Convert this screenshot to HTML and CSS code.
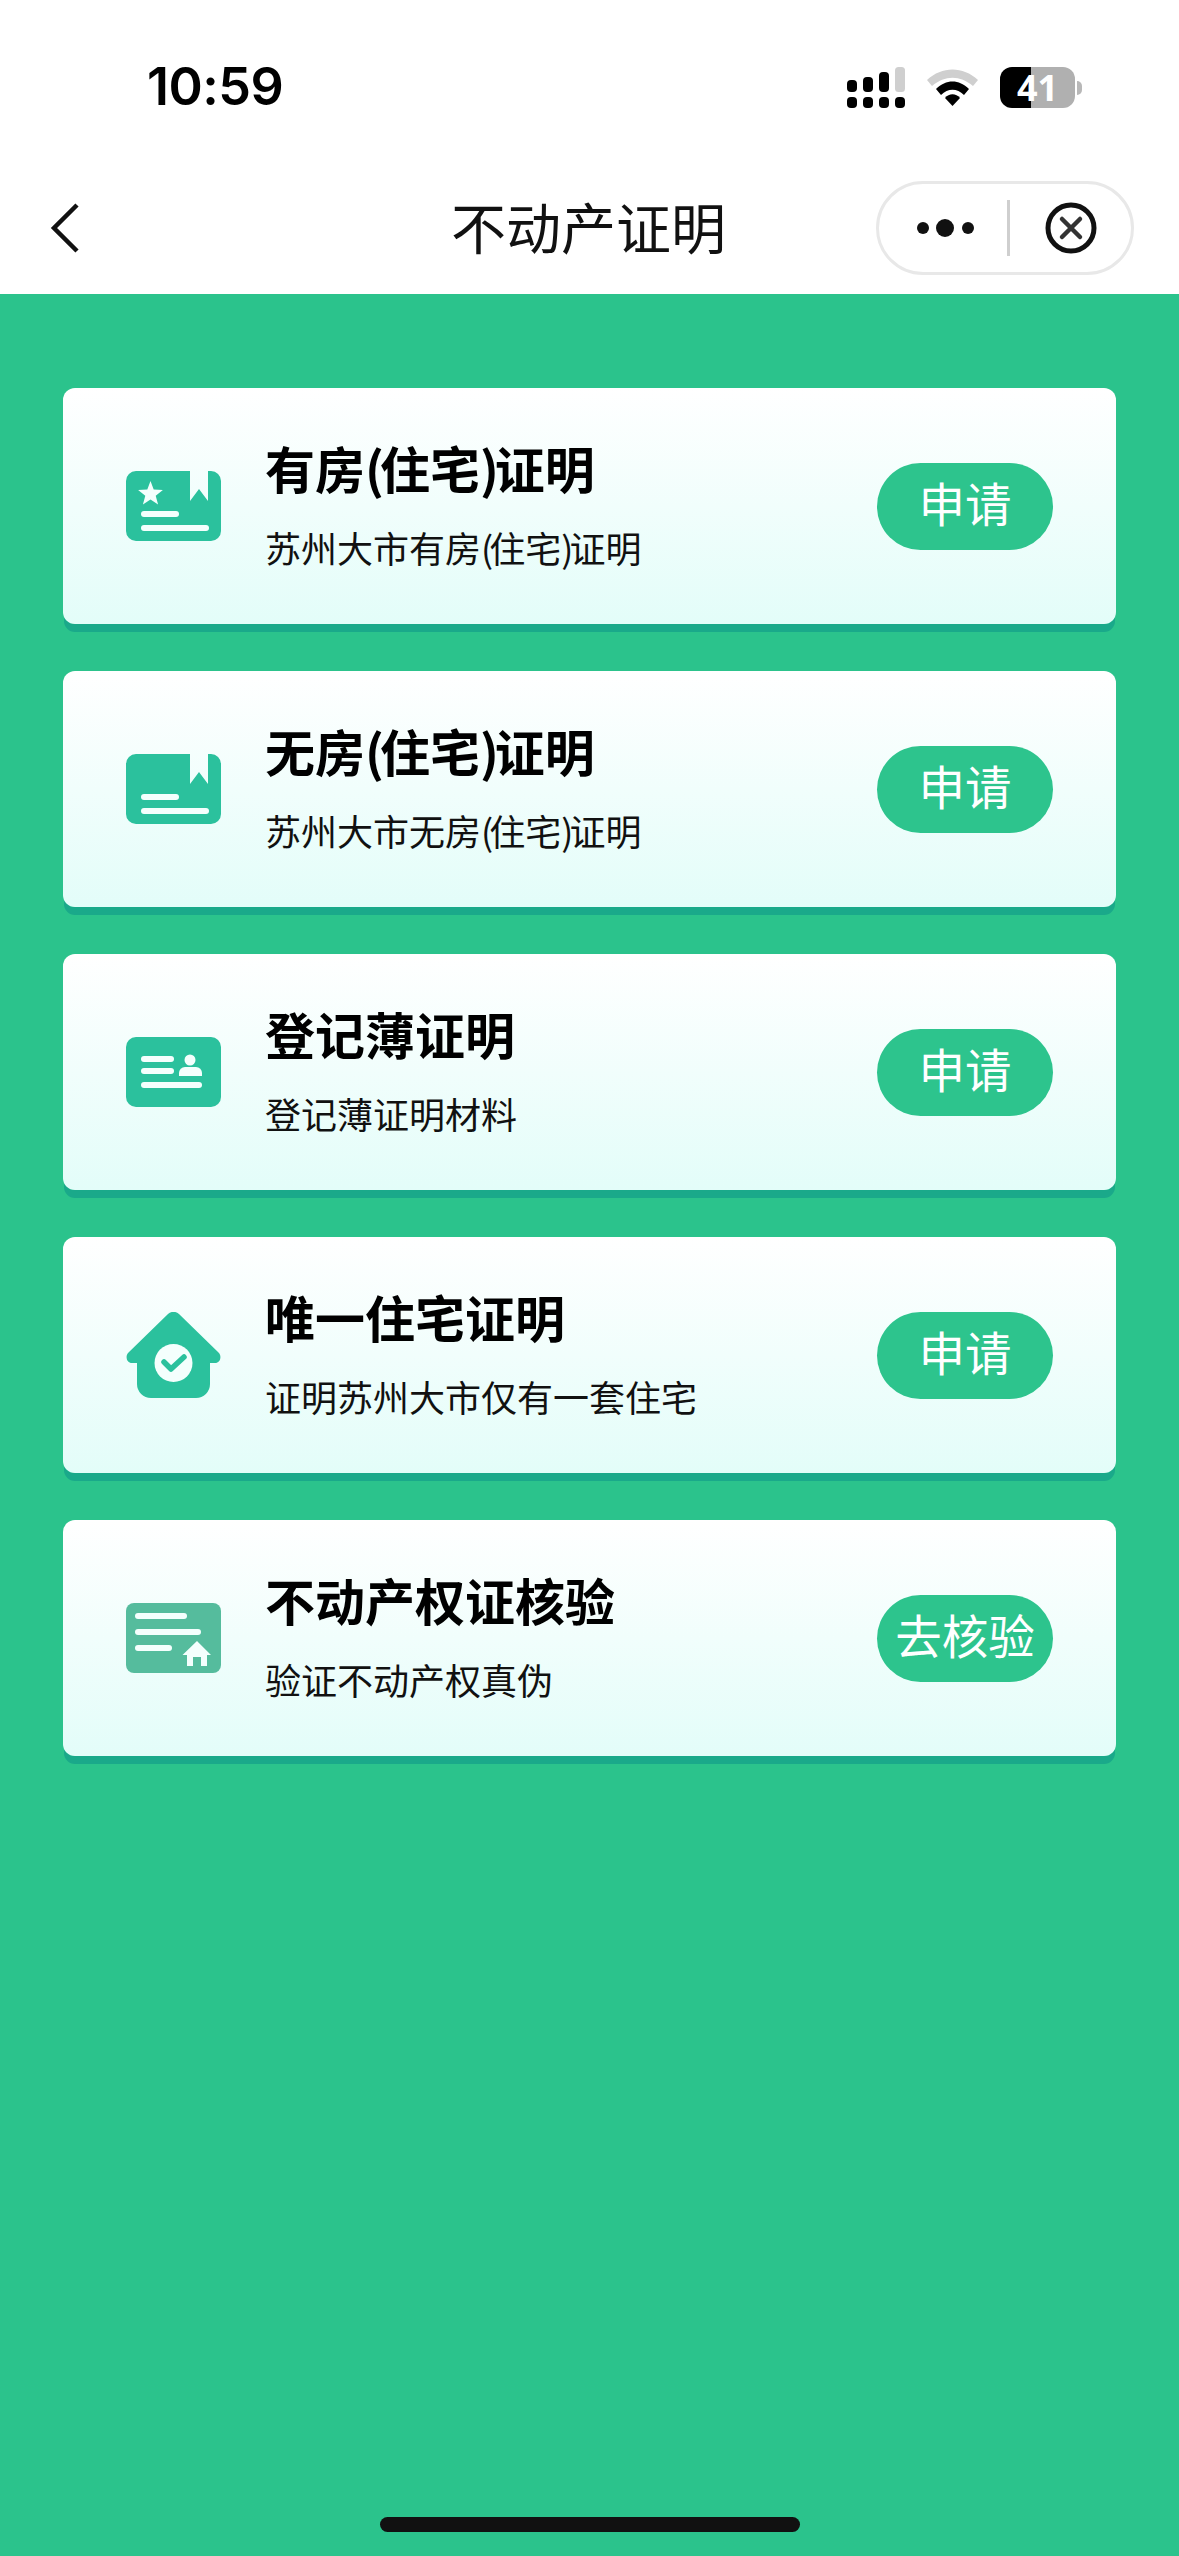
FILE: index.html
```html
<!DOCTYPE html>
<html lang="zh-CN">
<head>
    <meta charset="UTF-8">
    <meta name="viewport" content="width=device-width, initial-scale=1.0">
    <title>不动产证明</title>
    <link rel="stylesheet" href="styles.css">
</head>
<body>
    <header class="top">
        <div class="status">
            <span class="time">10:59</span>
            <div class="status-icons">
                <svg class="signal" width="58" height="41" viewBox="0 0 58 41">
                    <rect x="0" y="13" width="10" height="12" rx="4"></rect>
                    <rect x="16" y="10" width="10" height="15" rx="4"></rect>
                    <rect x="32" y="5" width="10" height="20" rx="4"></rect>
                    <rect x="48" y="0" width="10" height="25" rx="3.5" fill="#cfcfcf"></rect>
                    <rect x="0" y="30" width="10" height="11" rx="4"></rect>
                    <rect x="16" y="30" width="10" height="11" rx="4"></rect>
                    <rect x="32" y="30" width="10" height="11" rx="4"></rect>
                    <rect x="48" y="30" width="10" height="11" rx="4"></rect>
                </svg>
                <svg class="wifi" width="51" height="37" viewBox="0 0 51 37">
                    <path d="M0 11 C15 -3 36 -3 51 11 L46 17 C33 6 18 6 5 17 Z" fill="#cfcfcf"></path>
                    <path d="M9 20 C19 10 32 10 42 20 L37 26 C30 19 21 19 14 26 Z"></path>
                    <path d="M18 29 C22 24 29 24 33 29 L25.5 37 Z"></path>
                </svg>
                <div class="battery">
                    <div class="battery-body"><span class="battery-level">41</span></div>
                    <div class="battery-nub"></div>
                </div>
            </div>
        </div>
        <nav class="nav">
            <svg class="back" width="30" height="50" viewBox="0 0 30 50">
                <path d="M27 2 L4 25 L27 48" fill="none" stroke="#111" stroke-width="4.5"></path>
            </svg>
            <h1 class="page-title">不动产证明</h1>
            <div class="capsule">
                <svg class="more" width="64" height="20" viewBox="0 0 64 20">
                    <circle cx="7" cy="10" r="6"></circle>
                    <circle cx="29" cy="10" r="9"></circle>
                    <circle cx="52" cy="10" r="6"></circle>
                </svg>
                <div class="capsule-line"></div>
                <svg class="close" width="52" height="52" viewBox="0 0 52 52">
                    <circle cx="26" cy="26" r="23" fill="none" stroke="#111" stroke-width="5"></circle>
                    <path d="M17 17 L35 35 M35 17 L17 35" fill="none" stroke="#333" stroke-width="4.500" stroke-linecap="round"></path>
                </svg>
            </div>
        </nav>
    </header>

    <main class="list">
        <section class="card">
            <svg class="card-icon" width="95" height="70" viewBox="0 0 95 70">
                <path d="M10 0 H64 V30 L73 18 L82 30 V0 H85 A10 10 0 0 1 95 10 V60 A10 10 0 0 1 85 70 H10 A10 10 0 0 1 0 60 V10 A10 10 0 0 1 10 0 Z" fill="#2bc19d"></path>
                <path d="M24.5 10 L27.700 18.500 L36.900 19 L29.700 24.700 L32.100 33.500 L24.500 28.500 L16.900 33.500 L19.300 24.700 L12.100 19 L21.300 18.500 Z" fill="#f4fffd"></path>
                <rect x="15" y="40" width="38" height="6" rx="3" fill="#f4fffd"></rect>
                <rect x="15" y="54" width="68" height="6" rx="3" fill="#f4fffd"></rect>
            </svg>
            <div class="card-text">
                <h2 class="card-title">有房<span class="paren">(</span>住宅<span class="paren">)</span>证明</h2>
                <p class="card-desc">苏州大市有房<span class="paren">(</span>住宅<span class="paren">)</span>证明</p>
            </div>
            <button class="apply">申请</button>
        </section>

        <section class="card">
            <svg class="card-icon" width="95" height="70" viewBox="0 0 95 70">
                <path d="M10 0 H64 V30 L73 18 L82 30 V0 H85 A10 10 0 0 1 95 10 V60 A10 10 0 0 1 85 70 H10 A10 10 0 0 1 0 60 V10 A10 10 0 0 1 10 0 Z" fill="#2bc19d"></path>
                <rect x="15" y="40" width="38" height="6" rx="3" fill="#f4fffd"></rect>
                <rect x="15" y="54" width="68" height="6" rx="3" fill="#f4fffd"></rect>
            </svg>
            <div class="card-text">
                <h2 class="card-title">无房<span class="paren">(</span>住宅<span class="paren">)</span>证明</h2>
                <p class="card-desc">苏州大市无房<span class="paren">(</span>住宅<span class="paren">)</span>证明</p>
            </div>
            <button class="apply">申请</button>
        </section>

        <section class="card">
            <svg class="card-icon" width="95" height="70" viewBox="0 0 95 70">
                <rect width="95" height="70" rx="10" fill="#2bc19d"></rect>
                <rect x="15" y="19" width="33" height="6" rx="3" fill="#f4fffd"></rect>
                <rect x="15" y="31" width="33" height="6" rx="3" fill="#f4fffd"></rect>
                <rect x="15" y="45" width="61" height="6" rx="3" fill="#f4fffd"></rect>
                <circle cx="64" cy="23" r="5.500" fill="#f4fffd"></circle>
                <path d="M53 39 V36 A6 6 0 0 1 59 30 H70 A6 6 0 0 1 76 36 V39 Z" fill="#f4fffd"></path>
            </svg>
            <div class="card-text">
                <h2 class="card-title">登记薄证明</h2>
                <p class="card-desc">登记薄证明材料</p>
            </div>
            <button class="apply">申请</button>
        </section>

        <section class="card">
            <svg class="card-icon" width="95" height="87" viewBox="0 0 95 87">
                <path d="M42 2 A8 8 0 0 1 53 2 L93 41 C96 45 94 51 89 51 H84 V72 A14 14 0 0 1 70 86 H25 A14 14 0 0 1 11 72 V51 H6 C1 51 -1 45 2 41 Z" fill="#2bc19d"></path>
                <circle cx="47.500" cy="51" r="19" fill="#f4fffd"></circle>
                <path d="M38 50 L45 57 L58 45" fill="none" stroke="#2bc19d" stroke-width="5.500" stroke-linecap="round" stroke-linejoin="round"></path>
            </svg>
            <div class="card-text">
                <h2 class="card-title">唯一住宅证明</h2>
                <p class="card-desc">证明苏州大市仅有一套住宅</p>
            </div>
            <button class="apply">申请</button>
        </section>

        <section class="card">
            <svg class="card-icon" width="95" height="70" viewBox="0 0 95 70">
                <rect width="95" height="70" rx="8" fill="#55bc9d"></rect>
                <rect x="9" y="10" width="52" height="6" rx="3" fill="#f4fffd"></rect>
                <rect x="9" y="26" width="66" height="6" rx="3" fill="#f4fffd"></rect>
                <rect x="9" y="42" width="37" height="6" rx="3" fill="#f4fffd"></rect>
                <path d="M71 38 L85 52 H81 V63 H75 V54 H67 V63 H61 V52 H56.500 Z" fill="#f4fffd"></path>
            </svg>
            <div class="card-text">
                <h2 class="card-title">不动产权证核验</h2>
                <p class="card-desc">验证不动产权真伪</p>
            </div>
            <button class="apply">去核验</button>
        </section>
    </main>

    <div class="home-bar"></div>
</body>
</html>
```

FILE: styles.css
```css
* {
    box-sizing: border-box;
}

html, body {
    margin: 0;
    padding: 0;
}

body {
    font-family: "Noto Sans CJK SC", "Noto Sans", sans-serif;
    background-color: #2bc38c;
    color: #000;
    width: 1179px;
    height: 2556px;
    position: relative;
    overflow: hidden;
}

.top {
    height: 294px;
    background-color: #fff;
}

.status {
    height: 181px;
    padding: 59px 97px 0 147px;
    display: flex;
    justify-content: space-between;
    align-items: flex-start;
}

.time {
    font-family: Inter, "Noto Sans", sans-serif;
    font-size: 52px;
    font-weight: 600;
    line-height: 56px;
    letter-spacing: -0.5px;
}

.status-icons {
    display: flex;
    align-items: center;
    padding-top: 8px;
}

.signal {
    margin-right: 22px;
}

.wifi {
    margin-right: 22px;
}

.battery {
    display: flex;
    align-items: center;
}

.battery-body {
    width: 75px;
    height: 41px;
    border-radius: 12px;
    background: linear-gradient(to right, #000 41%, #b0b0b0 41%);
    display: flex;
    justify-content: center;
    align-items: center;
}

.battery-level {
    font-family: "Open Sans", sans-serif;
    font-size: 36px;
    font-weight: 700;
    line-height: 41px;
    color: #fff;
}

.battery-nub {
    width: 5px;
    height: 14px;
    margin-left: 2px;
    border-radius: 0 7px 7px 0;
    background-color: #b8b8b8;
}

.nav {
    height: 113px;
    padding: 0 45px 19px 50px;
    display: flex;
    justify-content: space-between;
    align-items: center;
    position: relative;
}

.back {
    display: block;
}

.page-title {
    position: absolute;
    left: 0;
    right: 0;
    top: 0;
    margin: 0;
    padding-right: 2px;
    text-align: center;
    font-size: 55px;
    font-weight: 400;
    line-height: 88px;
    color: #111;
}

.capsule {
    width: 258px;
    height: 94px;
    border: 3px solid #e8e8e8;
    border-radius: 47px;
    background-color: #fff;
    display: flex;
    align-items: center;
    padding-left: 37px;
}

.more {
    fill: #111;
}

.capsule-line {
    width: 3px;
    height: 56px;
    margin-left: 27px;
    margin-right: 35px;
    background-color: #cfcfcf;
}

.list {
    padding: 94px 63px 0;
    display: flex;
    flex-direction: column;
    gap: 47px;
}

.card {
    height: 236px;
    border-radius: 12px;
    background: linear-gradient(to bottom, #fff, #e3fdf9);
    box-shadow: 0 9px 0 -1px #1aa98a;
    display: flex;
    align-items: center;
    padding: 0 63px;
}

.card-icon {
    flex: none;
    display: block;
}

.card-text {
    flex: 1;
    margin-left: 44px;
    padding-bottom: 8px;
}

.card-title {
    margin: 0;
    font-size: 50px;
    font-weight: 700;
    line-height: 70px;
}

.card-desc {
    margin: 20px 0 0;
    font-size: 36px;
    font-weight: 400;
    line-height: 50px;
    color: #111;
}

.card-title .paren {
    letter-spacing: -4px;
}

.card-desc .paren {
    letter-spacing: -4px;
}

.apply {
    flex: none;
    width: 176px;
    height: 87px;
    padding: 0 0 10px;
    border: none;
    border-radius: 44px;
    background-color: #2dc48d;
    color: #fff;
    font-family: inherit;
    font-size: 46.5px;
    font-weight: 400;
    line-height: 77px;
}

.home-bar {
    position: absolute;
    left: 380px;
    top: 2517px;
    width: 420px;
    height: 15px;
    border-radius: 8px;
    background-color: #111;
}
```
